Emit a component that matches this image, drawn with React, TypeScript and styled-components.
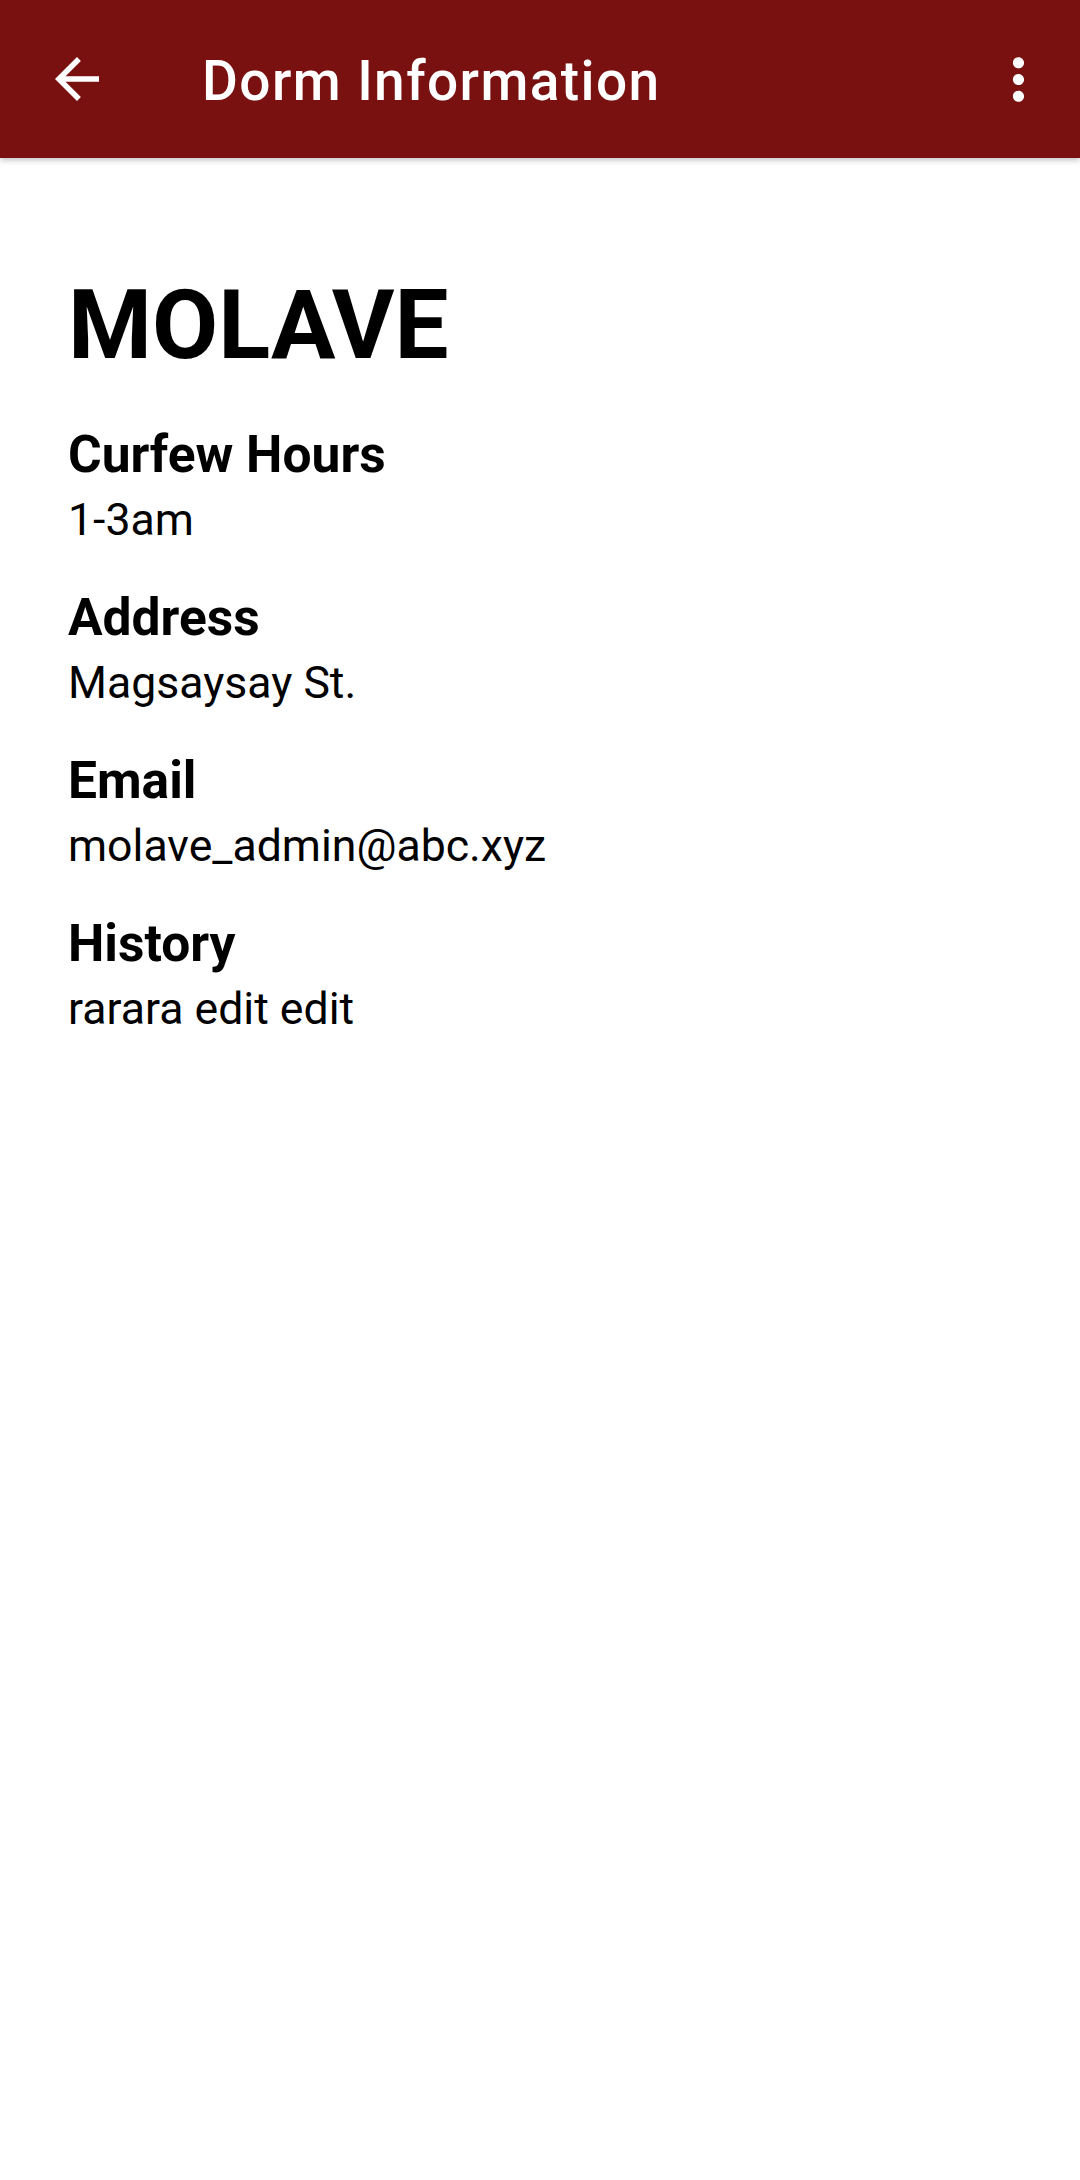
import React from "react";
import styled, { createGlobalStyle } from "styled-components";

const Global = createGlobalStyle`
  html, body { margin: 0; padding: 0; background: #ffffff; }
  body { font-family: Roboto, "Noto Sans", "Liberation Sans", sans-serif; }
`;

const Screen = styled.div`
  width: 1080px;
  min-height: 2180px;
  background: #ffffff;
`;

const Toolbar = styled.header`
  height: 158px;
  background: #7a1111;
  display: flex;
  align-items: center;
  padding: 0 28px 0 44px;
  box-sizing: border-box;
  box-shadow: 0 2px 6px rgba(0, 0, 0, 0.25);
  position: relative;
  z-index: 1;
`;

const IconButton = styled.div<{ $size: number }>`
  width: ${(p) => p.$size}px;
  height: ${(p) => p.$size}px;
  display: flex;
  align-items: center;
  justify-content: center;
  flex: none;
  svg { width: 100%; height: 100%; fill: #ffffff; }
`;

const Title = styled.h1`
  margin: 0 0 0 92px;
  flex: 1;
  color: #ffffff;
  font-size: 55px;
  font-weight: 500;
  letter-spacing: 1.4px;
  line-height: 1;
  padding-top: 4px;
`;

const Content = styled.main`
  padding: 108px 68px 0 68px;
  display: flex;
  flex-direction: column;
`;

const DormName = styled.h2`
  margin: 0 0 39px 0;
  font-size: 96px;
  font-weight: 700;
  line-height: 118px;
  color: #000000;
`;

const Section = styled.section`
  display: flex;
  flex-direction: column;
  margin-bottom: 32px;
`;

const Label = styled.div`
  font-size: 51.5px;
  font-weight: 700;
  line-height: 63px;
  color: #000000;
`;

const Value = styled.div`
  font-size: 44.6px;
  font-weight: 400;
  line-height: 68px;
  color: #000000;
`;

const fields = [
  { label: "Curfew Hours", value: "1-3am" },
  { label: "Address", value: "Magsaysay St." },
  { label: "Email", value: "molave_admin@abc.xyz" },
  { label: "History", value: "rarara edit edit" },
];

export default function App() {
  return (
    <Screen>
      <Global />
      <Toolbar>
        <IconButton $size={66}>
          <svg viewBox="0 0 24 24">
            <path d="M20 11H7.83l5.59-5.59L12 4l-8 8 8 8 1.41-1.41L7.83 13H20v-2z" />
          </svg>
        </IconButton>
        <Title>Dorm Information</Title>
        <IconButton $size={67}>
          <svg viewBox="0 0 24 24">
            <path d="M12 8c1.1 0 2-.9 2-2s-.9-2-2-2-2 .9-2 2 .9 2 2 2zm0 2c-1.1 0-2 .9-2 2s.9 2 2 2 2-.9 2-2-.9-2-2-2zm0 6c-1.1 0-2 .9-2 2s.9 2 2 2 2-.9 2-2-.9-2-2-2z" />
          </svg>
        </IconButton>
      </Toolbar>
      <Content>
        <DormName>MOLAVE</DormName>
        {fields.map((f) => (
          <Section key={f.label}>
            <Label>{f.label}</Label>
            <Value>{f.value}</Value>
          </Section>
        ))}
      </Content>
    </Screen>
  );
}
